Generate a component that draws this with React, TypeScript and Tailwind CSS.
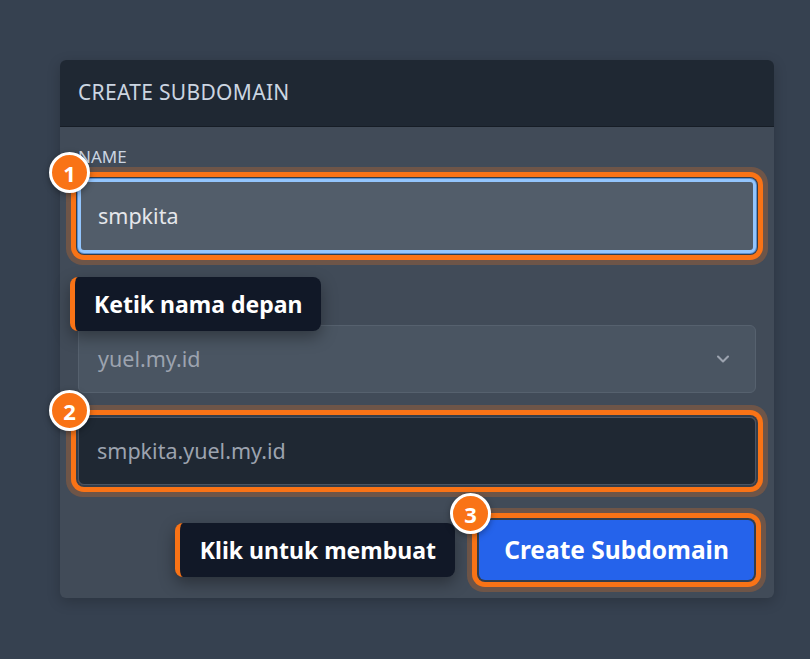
import React from 'react';
import { ChevronDown } from 'lucide-react';

const ring =
  'shadow-[0_0_0_2px_#333d4a,0_0_0_7px_#f97316,0_0_0_12px_rgba(249,115,22,0.25)]';

const Badge: React.FC<{ n: number }> = ({ n }) => (
  <div className="absolute -left-[29px] -top-[27px] z-20 w-[41px] h-[41px] rounded-full bg-[#f97316] border-[3px] border-white flex items-center justify-center text-white font-bold text-[22px] leading-none shadow-[0_2px_6px_rgba(0,0,0,0.35)]">
    {n}
  </div>
);

const Tip: React.FC<{ text: string; className?: string }> = ({ text, className = '' }) => (
  <div
    className={`absolute z-10 h-[54px] flex items-center rounded-lg border-l-[5px] border-[#f97316] bg-[#111827] text-white font-bold text-[23px] whitespace-nowrap shadow-[0_6px_16px_rgba(0,0,0,0.35)] ${className}`}
  >
    {text}
  </div>
);

export default function App() {
  return (
    <div
      className="min-h-screen bg-[#364150] pt-[60px] pl-[60px]"
      style={{ fontFamily: '"Noto Sans", "Open Sans", sans-serif' }}
    >
      <div className="w-[714px] rounded-md bg-[#414b58] shadow-[0_4px_14px_rgba(0,0,0,0.2)]">
        {/* Header */}
        <div className="h-[67px] rounded-t-md bg-[#1f2833] border-b border-[#161d26] px-[18px] flex items-center">
          <h2 className="text-[21px] tracking-[0.015em] text-[#cbd5e1]">CREATE SUBDOMAIN</h2>
        </div>

        {/* Body */}
        <div className="px-[18px] pt-[18px] pb-[18px] flex flex-col">
          <label className="text-[17px] leading-6 text-[#cbd5e1]">NAME</label>
          <div className="relative mt-[10px]">
            <Badge n={1} />
            <div className={`rounded-md ${ring}`}>
              <div className="h-[74px] rounded-md bg-[#525d6a] border-[3px] border-[#93c5fd] shadow-[0_0_0_1px_#5b8fd0] flex items-center pl-[17px] text-[21.5px] text-[#e5e7eb]">
                smpkita
              </div>
            </div>
            <Tip text="Ketik nama depan" className="-left-[8px] top-[98px] pl-[19px] pr-[18px]" />
          </div>

          {/* domain label sits under the tooltip */}
          <div className="mt-[38px] h-6" />
          <div className="mt-[10px] h-[68px] rounded-md bg-[#4a5562] border border-[#56616e] flex items-center justify-between pl-[19px] pr-[22px] text-[21.5px] text-[#9ca3af]">
            <span>yuel.my.id</span>
            <ChevronDown size={20} strokeWidth={2.5} className="text-[#9ca3af]" />
          </div>

          <div className="relative mt-[24px]">
            <Badge n={2} />
            <div className={`rounded-md ${ring}`}>
              <div className="h-[68px] rounded-md bg-[#1f2833] border border-[#4b5563] flex items-center pl-[18px] text-[21.5px] text-[#9ca3af]">
                smpkita.yuel.my.id
              </div>
            </div>
          </div>

          <div className="mt-[35px] flex justify-end pr-[2px]">
            <div className="relative">
              <Tip text="Klik untuk membuat" className="right-[299px] top-[3px] pl-[20px] pr-[19px]" />
              <Badge n={3} />
              <button className={`h-[60px] w-[275px] rounded-md bg-[#2563eb] text-white font-bold text-[24.5px] ${ring}`}>
                Create Subdomain
              </button>
            </div>
          </div>
        </div>
      </div>
    </div>
  );
}
